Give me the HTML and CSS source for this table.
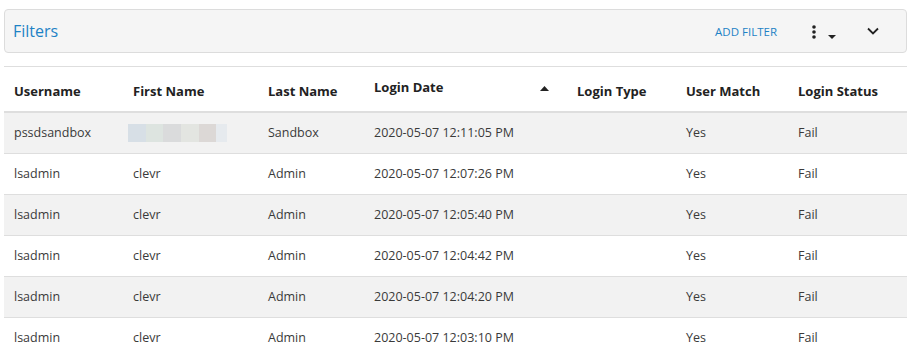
FILE: index.html
```html
<!DOCTYPE html>
<html lang="en">
<head>
    <meta charset="UTF-8">
    <title>Login History</title>
    <link rel="stylesheet" href="styles.css">
</head>
<body>
    <div class="filters">
        <span class="filters-title">Filters</span>
        <div class="filters-actions">
            <button class="add-filter">ADD FILTER</button>
            <button class="icon-button menu-button">
                <svg width="6" height="14" viewBox="0 0 6 14"><circle cx="3" cy="2" r="1.8"/><circle cx="3" cy="7" r="1.8"/><circle cx="3" cy="12" r="1.8"/></svg>
                <svg class="caret" width="8" height="4" viewBox="0 0 8 4"><path d="M0 0h8L4 4z"/></svg>
            </button>
            <button class="icon-button collapse-button">
                <svg width="12" height="8" viewBox="0 0 12 8"><path d="M1 1.5l5 5 5-5" fill="none" stroke="#222" stroke-width="1.8"/></svg>
            </button>
        </div>
    </div>

    <table class="grid">
        <colgroup>
            <col style="width:119px"><col style="width:135px"><col style="width:106px"><col style="width:203px">
            <col style="width:109px"><col style="width:112px"><col style="width:119px">
        </colgroup>
        <thead>
            <tr>
                <th>Username</th>
                <th>First Name</th>
                <th>Last Name</th>
                <th class="sorted"><span class="sorted-label">Login Date</span><svg class="sort-arrow" width="9" height="5" viewBox="0 0 9 5"><path d="M0 5h9L4.5 0z"/></svg></th>
                <th>Login Type</th>
                <th>User Match</th>
                <th>Login Status</th>
            </tr>
        </thead>
        <tbody>
            <tr>
                <td>pssdsandbox</td>
                <td><span class="blurred"><i class="b1"></i><i class="b2"></i><i class="b3"></i><i class="b4"></i><i class="b5"></i><i class="b6"></i></span></td>
                <td>Sandbox</td>
                <td>2020-05-07 12:11:05 PM</td>
                <td></td>
                <td>Yes</td>
                <td>Fail</td>
            </tr>
            <tr>
                <td>lsadmin</td><td>clevr</td><td>Admin</td><td>2020-05-07 12:07:26 PM</td><td></td><td>Yes</td><td>Fail</td>
            </tr>
            <tr>
                <td>lsadmin</td><td>clevr</td><td>Admin</td><td>2020-05-07 12:05:40 PM</td><td></td><td>Yes</td><td>Fail</td>
            </tr>
            <tr>
                <td>lsadmin</td><td>clevr</td><td>Admin</td><td>2020-05-07 12:04:42 PM</td><td></td><td>Yes</td><td>Fail</td>
            </tr>
            <tr>
                <td>lsadmin</td><td>clevr</td><td>Admin</td><td>2020-05-07 12:04:20 PM</td><td></td><td>Yes</td><td>Fail</td>
            </tr>
            <tr>
                <td>lsadmin</td><td>clevr</td><td>Admin</td><td>2020-05-07 12:03:10 PM</td><td></td><td>Yes</td><td>Fail</td>
            </tr>
        </tbody>
    </table>
</body>
</html>
```

FILE: styles.css
```css
body {
    margin: 0;
    padding: 9px 8px 0 4px;
    background-color: #fff;
    font-family: "Open Sans", "Noto Sans", sans-serif;
    font-size: 12.5px;
    color: #333;
    overflow: hidden;
}
.filters {
    height: 44px;
    box-sizing: border-box;
    display: flex;
    align-items: center;
    justify-content: space-between;
    padding: 0 0 0 8px;
    background-color: #f5f5f5;
    border: 1px solid #dcdcdc;
    border-radius: 4px;
}
.filters-title {
    font-size: 16px;
    color: #1d82c5;
}
.filters-actions {
    display: flex;
    align-items: center;
}
.add-filter {
    border: none;
    background: none;
    padding: 0;
    font-family: inherit;
    font-size: 11.5px;
    color: #1d82c5;
    cursor: pointer;
    margin-right: 34px;
}
.icon-button {
    border: none;
    background: none;
    padding: 0;
    cursor: pointer;
    display: flex;
    align-items: center;
}
.menu-button {
    margin-right: 31px;
    margin-top: 2px;
}
.menu-button svg {
    fill: #222;
}
.menu-button .caret {
    margin-left: 11px;
    margin-top: 9px;
}
.collapse-button {
    margin-right: 27px;
}
.grid {
    width: 903px;
    margin-top: 13px;
    border-collapse: collapse;
    table-layout: fixed;
    border-top: 1px solid #dedede;
}
.grid th {
    height: 45px;
    padding: 4px 10px 0;
    box-sizing: border-box;
    text-align: left;
    font-weight: 700;
    font-size: 13px;
    color: #222;
    border-bottom: 2px solid #dedede;
    white-space: nowrap;
}
.grid th.sorted {
    position: relative;
}
.sorted-label {
    position: relative;
    top: -4px;
}
.sort-arrow {
    position: absolute;
    left: 176px;
    top: 19px;
    fill: #222;
}
.grid td {
    height: 40px;
    padding: 0 10px;
    border-bottom: 1px solid #dedede;
    color: #3a3a3a;
    white-space: nowrap;
}
.grid tbody tr:nth-child(odd) {
    background-color: #f2f2f2;
}
.blurred {
    display: inline-flex;
    margin-left: -5px;
    vertical-align: middle;
}
.blurred i {
    display: block;
    height: 18px;
    width: 18px;
}
.blurred .b1 { background-color: #d7dfe6; }
.blurred .b2 { background-color: #dde4e0; width: 17px; }
.blurred .b3 { background-color: #dadbdc; }
.blurred .b4 { background-color: #e3e5e1; }
.blurred .b5 { background-color: #dcd8d6; width: 17px; }
.blurred .b6 { background-color: #e6eaee; width: 11px; }
```
